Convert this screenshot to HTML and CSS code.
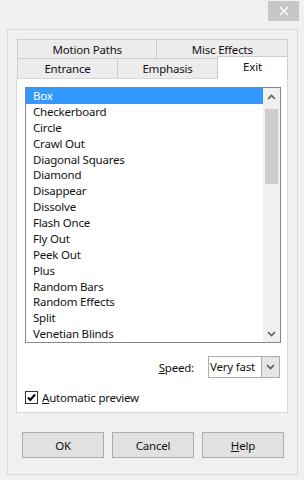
FILE: index.html
```html
<!DOCTYPE html>
<html>
<head>
<meta charset="utf-8">
<link rel="stylesheet" href="styles.css">
</head>
<body>
<div class="dialog">
  <div class="titlebar">
    <div class="close">
      <svg width="10" height="10" viewBox="0 0 10 10"><path d="M1 1L9 9M9 1L1 9" stroke="#fff" stroke-width="1.5"/></svg>
    </div>
  </div>
  <div class="group">
    <div class="tabs">
      <div class="tabrow row1">
        <div class="tab t-motion">Motion Paths</div>
        <div class="tab t-misc">Misc Effects</div>
      </div>
      <div class="tabrow row2">
        <div class="tab t-entrance">Entrance</div>
        <div class="tab t-emphasis">Emphasis</div>
        <div class="tab t-exit">Exit</div>
      </div>
    </div>
    <div class="panel">
      <div class="listbox">
        <div class="items">
          <div class="item selected">Box</div>
          <div class="item">Checkerboard</div>
          <div class="item">Circle</div>
          <div class="item">Crawl Out</div>
          <div class="item">Diagonal Squares</div>
          <div class="item">Diamond</div>
          <div class="item">Disappear</div>
          <div class="item">Dissolve</div>
          <div class="item">Flash Once</div>
          <div class="item">Fly Out</div>
          <div class="item">Peek Out</div>
          <div class="item">Plus</div>
          <div class="item">Random Bars</div>
          <div class="item">Random Effects</div>
          <div class="item">Split</div>
          <div class="item">Venetian Blinds</div>
        </div>
        <div class="scrollbar">
          <div class="sb-btn">
            <svg width="9" height="6" viewBox="0 0 9 6"><path d="M1 5L4.5 1.5L8 5" fill="none" stroke="#606060" stroke-width="1.6"/></svg>
          </div>
          <div class="sb-track"><div class="sb-thumb"></div></div>
          <div class="sb-btn">
            <svg width="9" height="6" viewBox="0 0 9 6"><path d="M1 1L4.5 4.5L8 1" fill="none" stroke="#606060" stroke-width="1.6"/></svg>
          </div>
        </div>
      </div>
      <div class="speedrow">
        <span class="label"><u>S</u>peed:</span>
        <div class="combo">
          <span class="combo-text">Very fast</span>
          <span class="combo-btn">
            <svg width="9" height="6" viewBox="0 0 9 6"><path d="M1 1L4.5 4.5L8 1" fill="none" stroke="#555" stroke-width="1.6"/></svg>
          </span>
        </div>
      </div>
      <div class="checkrow">
        <span class="checkbox">
          <svg width="11" height="11" viewBox="0 0 11 11"><path d="M2 5.5L4.3 8L9 2.5" fill="none" stroke="#000" stroke-width="2"/></svg>
        </span>
        <span class="checklabel"><u>A</u>utomatic preview</span>
      </div>
    </div>
    <div class="buttons">
      <div class="btn">OK</div>
      <div class="btn">Cancel</div>
      <div class="btn"><u>H</u>elp</div>
    </div>
  </div>
</div>
</body>
</html>
```
FILE: styles.css
```css
* { box-sizing: border-box; }
html, body {
  margin: 0;
  padding: 0;
  background: #f0f0f0;
}
body {
  font-family: "Noto Sans", "Open Sans", sans-serif;
  font-size: 11.5px;
  letter-spacing: -0.2px;
  color: #111;
  width: 304px;
  height: 480px;
  overflow: hidden;
}
.dialog {
  width: 304px;
  height: 480px;
}
.titlebar {
  height: 29px;
  display: flex;
  justify-content: flex-end;
  align-items: flex-start;
  padding-top: 1px;
  padding-right: 5px;
}
.close {
  width: 31px;
  height: 20px;
  background: #c7c7c7;
  display: flex;
  align-items: center;
  justify-content: center;
}
.group {
  margin-left: 7px;
  width: 291px;
  height: 446px;
  border: 1px solid #dadada;
  background: #f0f0f0;
  padding: 9px 0 0 8px;
}
.tabs {
  width: 272px;
}
.tabrow {
  display: flex;
  padding-left: 1px;
}
.tab {
  border: 1px solid #cdcdcd;
  background: #ececec;
  display: flex;
  align-items: center;
  justify-content: center;
  line-height: 1;
}
.tab + .tab { margin-left: -1px; }
.row1 .tab { height: 21px; padding-top: 1px; }
.t-motion { width: 141px; }
.t-misc { width: 132px; }
.row2 {
  margin-top: -1px;
  height: 19px;
  align-items: flex-end;
}
.row2 .tab {
  height: 20px;
  border-bottom: none;
  padding-bottom: 0;
}
.t-entrance { width: 101px; }
.t-emphasis { width: 101px; }
.row2 .tab.t-exit {
  width: 71px;
  position: relative;
  z-index: 2;
  background: #fff;
  height: 23px;
  margin-bottom: -1px;
  padding-bottom: 2px;
}
.panel {
  width: 272px;
  height: 335px;
  border: 1px solid #d9d9d9;
  background: #fff;
  padding: 8px 6px 0 8px;
}
.listbox {
  width: 256px;
  height: 256px;
  border: 1px solid #828790;
  display: flex;
  background: #fff;
}
.items {
  flex: 1;
}
.item {
  height: 15.875px;
  line-height: 15.875px;
  padding-left: 7px;
  white-space: nowrap;
}
.item.selected {
  background: #3399ff;
  color: #fff;
}
.scrollbar {
  width: 17px;
  display: flex;
  flex-direction: column;
  background: #f0f0f0;
}
.sb-btn {
  height: 17px;
  display: flex;
  align-items: center;
  justify-content: center;
}
.sb-track {
  flex: 1;
  padding: 4px 2px 0 2px;
}
.sb-thumb {
  height: 75px;
  background: #cdcdcd;
}
.speedrow {
  margin-top: 13px;
  display: flex;
  align-items: center;
  justify-content: flex-end;
  padding-right: 1px;
}
.label {
  margin-right: 14px;
}
.combo {
  width: 72px;
  height: 22px;
  border: 1px solid #acacac;
  display: flex;
  background: #fff;
}
.combo-text {
  flex: 1;
  padding-left: 1px;
  line-height: 20px;
}
.combo-btn {
  width: 18px;
  background: #e5e5e5;
  border-left: 1px solid #acacac;
  display: flex;
  align-items: center;
  justify-content: center;
}
.checkrow {
  margin-top: 12px;
  display: flex;
  align-items: center;
}
.checkbox {
  width: 13px;
  height: 13px;
  border: 1px solid #333;
  background: #fff;
  display: flex;
  align-items: center;
  justify-content: center;
  margin-right: 4px;
}
.buttons {
  display: flex;
  gap: 8px;
  margin-top: 19px;
  margin-left: 6px;
}
.btn {
  width: 82px;
  height: 26px;
  border: 1px solid #adadad;
  background: #e1e1e1;
  display: flex;
  align-items: center;
  justify-content: center;
}
```
